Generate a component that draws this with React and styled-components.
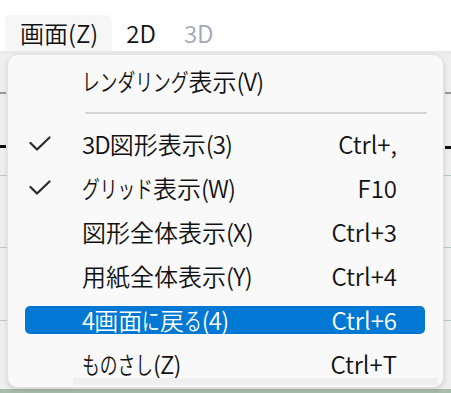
import React from 'react';
import styled, { createGlobalStyle } from 'styled-components';

const GlobalStyle = createGlobalStyle`
  html, body {
    margin: 0;
    padding: 0;
    background: #ffffff;
  }
  body {
    font-family: "Noto Sans CJK JP", "Noto Sans", sans-serif;
  }
`;

const Page = styled.div`
  position: relative;
  width: 451px;
  height: 393px;
  overflow: hidden;
  display: flex;
  flex-direction: column;
  background: #ffffff;
`;

// メニューバー
const MenuBar = styled.div`
  height: 51px;
  flex: none;
  display: flex;
  align-items: flex-end;
  padding-left: 5px;
  background: #ffffff;
`;

const MenuTab = styled.div`
  height: 36px;
  padding: 0 14px 0 ${p => (p.first ? 15 : 14)}px;
  display: flex;
  align-items: center;
  font-size: 24px;
  font-weight: 350;
  line-height: 1;
  color: ${p => (p.disabled ? '#a3a8b8' : '#111111')};
  background: ${p => (p.active ? '#f6f6f6' : 'transparent')};
  border-radius: 6px 6px 0 0;
  font-feature-settings: "palt";
`;

const Canvas = styled.svg`
  display: block;
  flex: 1;
`;

// ドロップダウン
const Menu = styled.div`
  position: absolute;
  left: 7px;
  top: 54px;
  width: 437px;
  height: 334px;
  box-sizing: border-box;
  padding-top: 4px;
  background: #f9f9f9;
  border: 1px solid #e3e3e3;
  border-radius: 11px;
  box-shadow: 0 2px 5px rgba(0, 0, 0, 0.12);
  display: flex;
  flex-direction: column;
`;

const Row = styled.div`
  height: 44px;
  box-sizing: border-box;
  padding: 8px 18px 8px 17px;
  flex: none;
`;

const Item = styled.div`
  height: 28px;
  display: flex;
  align-items: center;
  padding: 0 28px 0 4px;
  border-radius: 5px;
  background: ${p => (p.active ? '#0078d4' : 'transparent')};
  color: ${p => (p.active ? '#ffffff' : '#111111')};
  font-size: 24px;
  font-weight: 350;
  line-height: 1;
`;

const Check = styled.span`
  width: 53px;
  flex: none;
  display: flex;
  align-items: center;
`;

const Label = styled.span`
  flex: 1;
  white-space: nowrap;
`;

const KANA_SCALE = 0.74;

// かなは横幅を詰めた字形で表示
const Kana = styled.span`
  display: inline-block;
  transform: scaleX(${KANA_SCALE});
  transform-origin: left center;
  margin-right: ${p => -p.count * 24 * (1 - KANA_SCALE)}px;
`;

const Latin = styled.span`
  letter-spacing: -0.9px;
`;

const Shortcut = styled.span`
  white-space: nowrap;
`;

const Separator = styled.div`
  height: 19px;
  flex: none;
  display: flex;
  align-items: center;
  padding: 0 16px 0 77px;

  &::after {
    content: "";
    flex: 1;
    height: 2px;
    background: #d6d6d6;
  }
`;

const ScrollStrip = styled.div`
  position: absolute;
  left: 65px;
  right: 5px;
  bottom: 2px;
  height: 7px;
  background: #efefef;
`;

const CheckMark = () => (
  <svg width="22" height="16" viewBox="0 0 22 16">
    <polyline
      points="1.5,7 8,13.5 20.5,1.5"
      fill="none"
      stroke="#2b2b2b"
      strokeWidth="2.2"
      strokeLinecap="round"
      strokeLinejoin="round"
    />
  </svg>
);

const kindOf = ch => {
  if (/[\u3041-\u3096\u30a1-\u30fa\u30fc]/.test(ch)) return 'kana';
  if (/[\x20-\x7e]/.test(ch)) return 'latin';
  return 'kanji';
};

const splitRuns = text => {
  const runs = [];
  for (const ch of text) {
    const kind = kindOf(ch);
    const last = runs[runs.length - 1];
    if (last && last.kind === kind) last.text += ch;
    else runs.push({ kind, text: ch });
  }
  return runs;
};

const LabelText = ({ text }) =>
  splitRuns(text).map((r, i) => {
    if (r.kind === 'kana') return <Kana key={i} count={[...r.text].length}>{r.text}</Kana>;
    if (r.kind === 'latin') return <Latin key={i}>{r.text}</Latin>;
    return <span key={i}>{r.text}</span>;
  });

const items = [
  { label: '3D図形表示(3)', shortcut: 'Ctrl+,', checked: true },
  { label: 'グリッド表示(W)', shortcut: 'F10', checked: true },
  { label: '図形全体表示(X)', shortcut: 'Ctrl+3' },
  { label: '用紙全体表示(Y)', shortcut: 'Ctrl+4' },
  { label: '4画面に戻る(4)', shortcut: 'Ctrl+6', active: true },
  { label: 'ものさし(Z)', shortcut: 'Ctrl+T' },
];

const MenuRow = ({ label, shortcut, checked, active }) => (
  <Row>
    <Item active={active}>
      <Check>{checked && <CheckMark />}</Check>
      <Label>
        <LabelText text={label} />
      </Label>
      {shortcut && <Shortcut>{shortcut}</Shortcut>}
    </Item>
  </Row>
);

export default function App() {
  return (
    <>
      <GlobalStyle />
      <Page>
        <MenuBar>
          <MenuTab first active>画面(Z)</MenuTab>
          <MenuTab>2D</MenuTab>
          <MenuTab disabled>3D</MenuTab>
        </MenuBar>
        {/* 背後の作図エリア */}
        <Canvas width="451" height="342" viewBox="0 0 451 342">
          <rect x="0" y="0" width="451" height="342" fill="#eeeeee" />
          <rect x="0" y="0" width="451" height="3" fill="#e9e9e9" />
          <rect x="0" y="41" width="6" height="2" fill="#9a9a9a" />
          <rect x="445" y="41" width="6" height="2" fill="#9a9a9a" />
          <rect x="0" y="94" width="6" height="3" fill="#111111" />
          <rect x="445" y="95" width="6" height="3" fill="#111111" />
          <rect x="0" y="124" width="451" height="1" fill="#b4cbbb" />
          <rect x="0" y="196" width="451" height="1" fill="#b4cbbb" />
          <rect x="0" y="269" width="451" height="1" fill="#b4cbbb" />
          <rect x="0" y="338" width="451" height="4" fill="#a9bbab" />
        </Canvas>
        <Menu>
          <MenuRow label="レンダリング表示(V)" />
          <Separator />
          {items.map(it => (
            <MenuRow key={it.label} {...it} />
          ))}
          <ScrollStrip />
        </Menu>
      </Page>
    </>
  );
}
